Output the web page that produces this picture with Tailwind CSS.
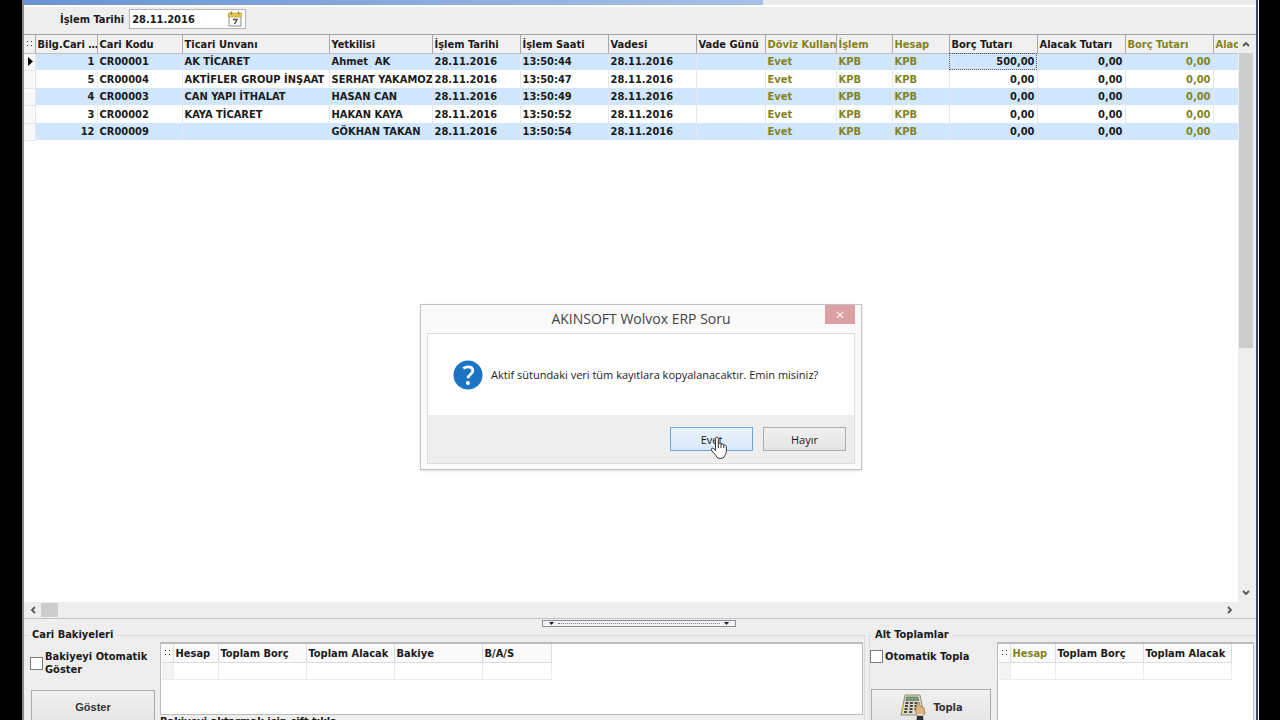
<!DOCTYPE html>
<html lang="tr">
<head>
  <meta charset="UTF-8">
  <meta name="viewport" content="width=device-width, initial-scale=1.0">
  <script src="https://cdn.jsdelivr.net/npm/@tailwindcss/browser@4"></script>
  <title>AKINSOFT Wolvox ERP</title>
</head>
<body class="h-screen overflow-hidden bg-black px-[22px] font-['DejaVu_Sans_Condensed','DejaVu_Sans',sans-serif] text-[11px] font-bold leading-[13px] text-[#1a1a1a]">
  <div class="relative flex h-full flex-col overflow-hidden border-x-2 border-l-[#8a8a8a] border-r-[#3d4670] bg-[#eeeeee] shadow-[1px_0_0_#ffffff]">

    <!-- Title strip -->
    <div class="flex h-[7px] shrink-0 border-b-2 border-white">
      <div class="w-3/5 bg-linear-to-r from-[#6893d2] to-[#a8c1e8]"></div>
      <div class="flex-1 bg-[#ececec]"></div>
    </div>

    <!-- Date filter -->
    <div class="flex h-[27px] shrink-0 items-start gap-[5px] pl-[36px] pt-[2px]">
      <label for="date" class="pt-1">İşlem Tarihi</label>
      <div class="flex h-5 w-[117px] items-center border border-[#b4b4b4] bg-white pl-[2px] pr-[3px]">
        <input id="date" type="text" value="28.11.2016" class="w-0 flex-1 font-bold outline-none">
        <button type="button" aria-label="Takvim">
          <svg class="block h-4 w-[14px]" viewBox="0 0 14 16">
            <rect x="1" y="3" width="12" height="12" fill="#fbfbfb" stroke="#8f8f8f"/>
            <rect x="0.5" y="2" width="13" height="4" fill="#e8c64a" stroke="#b89a3a" stroke-width=".6"/>
            <path d="M3.5 0.5v3M10.5 0.5v3" stroke="#8a7a4a" stroke-width="1.4"/>
            <path d="M5 8.5h4L6.6 13" fill="none" stroke="#4a4a4a" stroke-width="1.4"/>
          </svg>
        </button>
      </div>
    </div>

    <!-- Records grid -->
    <div class="flex min-h-0 flex-1 flex-col border-y border-t-[#a0a0a0] border-b-[#c4c4c4] pr-[2px]">
      <div class="flex min-h-0 flex-1">
        <div class="min-w-0 flex-1 overflow-hidden bg-white">
          <table class="w-[1276px] table-fixed border-collapse whitespace-nowrap">
            <colgroup>
              <col class="w-[11px]"><col class="w-[62px]"><col class="w-[85px]"><col class="w-[147px]">
              <col class="w-[103px]"><col class="w-[88px]"><col class="w-[88px]"><col class="w-[88px]">
              <col class="w-[69px]"><col class="w-[71px]"><col class="w-[56px]"><col class="w-[57px]">
              <col class="w-[88px]"><col class="w-[88px]"><col class="w-[88px]"><col class="w-[88px]">
            </colgroup>
            <thead>
              <tr id="head" class="h-[18px] bg-[#f0f0f0]"></tr>
            </thead>
            <tbody id="rows"></tbody>
          </table>
        </div>
        <div class="flex w-4 flex-col items-center">
          <button type="button" aria-label="Yukarı" class="flex h-[18px] shrink-0 items-center">
            <svg class="h-[6px] w-[8px]" viewBox="0 0 8 6"><path d="M1 5l3-3 3 3" fill="none" stroke="#555" stroke-width="1.8"/></svg>
          </button>
          <div class="h-[295px] w-[14px] bg-[#cdcdcd]"></div>
          <button type="button" aria-label="Aşağı" class="mt-auto flex h-[18px] shrink-0 items-center">
            <svg class="h-[6px] w-[8px]" viewBox="0 0 8 6"><path d="M1 1l3 3 3-3" fill="none" stroke="#555" stroke-width="1.8"/></svg>
          </button>
        </div>
      </div>
      <div class="flex h-4 shrink-0 items-center pr-4">
        <button type="button" aria-label="Sol" class="flex w-[17px] justify-center">
          <svg class="h-[8px] w-[6px]" viewBox="0 0 6 8"><path d="M5 1L2 4l3 3" fill="none" stroke="#555" stroke-width="1.8"/></svg>
        </button>
        <div class="h-[14px] w-[17px] bg-[#cdcdcd]"></div>
        <button type="button" aria-label="Sağ" class="ml-auto flex w-[17px] justify-center">
          <svg class="h-[8px] w-[6px]" viewBox="0 0 6 8"><path d="M1 1l3 3-3 3" fill="none" stroke="#555" stroke-width="1.8"/></svg>
        </button>
      </div>
    </div>

    <!-- Splitter -->
    <div class="flex h-[9px] shrink-0 justify-center pt-px pr-[2px]">
      <div class="flex h-[7px] w-[194px] items-center justify-between border border-[#8d8d98] bg-[#f4f4f4] px-[6px]">
        <svg class="h-[3px] w-[5px]" viewBox="0 0 5 3"><path d="M0 0h5L2.5 3z" fill="#16163c"/></svg>
        <div class="mx-1 flex-1 border-t border-dotted border-[#7a7a90]"></div>
        <svg class="h-[3px] w-[5px]" viewBox="0 0 5 3"><path d="M0 0h5L2.5 3z" fill="#16163c"/></svg>
      </div>
    </div>

    <!-- Totals -->
    <div class="flex h-[92px] shrink-0 gap-1">
      <fieldset class="h-[110px] min-w-0 flex-1 border border-l-0 border-[#dcdcdc] pr-px">
        <legend class="ml-[5px] px-[3px] leading-[14px]">Cari Bakiyeleri</legend>
        <div class="flex">
          <div class="w-[136px] shrink-0 pl-[6px] pt-[8px]">
            <div class="flex items-center gap-[2px]">
              <input id="autoBalance" type="checkbox" class="size-[13px] shrink-0 appearance-none border border-[#7c7c7c] bg-white">
              <label for="autoBalance" class="whitespace-nowrap">Bakiyeyi Otomatik<br>Göster</label>
            </div>
            <button type="button" class="mt-[14px] ml-px h-[35px] w-[124px] border border-[#ababab] bg-linear-to-b from-[#f0f0f0] to-[#e5e5e5] font-['Liberation_Sans',sans-serif] font-bold text-[#333]">Göster</button>
          </div>
          <div class="min-w-0 flex-1">
            <div class="h-[73px] border border-t-2 border-[#bcbcbc] bg-white px-px">
              <table class="w-[389px] table-fixed border-collapse whitespace-nowrap text-left">
                <colgroup><col class="w-[11px]"><col class="w-[45px]"><col class="w-[88px]"><col class="w-[88px]"><col class="w-[88px]"><col class="w-[69px]"></colgroup>
                <tr class="h-[18px] bg-[#fafafa] *:border-r *:border-b *:border-[#dcdcdc] *:p-0 *:pt-px *:pl-[2px]">
                  <th class="leading-none">
                    <svg class="h-[8px] w-[8px]" viewBox="0 0 8 8" fill="#333"><path d="M1 1h1v1H1zM5 1h1v1H5zM1 5h1v1H1zM5 5h1v1H5z"/></svg>
                  </th>
                  <th>Hesap</th><th>Toplam Borç</th><th>Toplam Alacak</th><th>Bakiye</th><th>B/A/S</th>
                </tr>
                <tr class="h-[17px] *:border-r *:border-b *:border-[#ececec]">
                  <td class="bg-[#f4f4f4]"></td><td></td><td></td><td></td><td></td><td></td>
                </tr>
              </table>
            </div>
            <p class="whitespace-nowrap">Bakiyeyi aktarmak için çift tıkla</p>
          </div>
        </div>
      </fieldset>

      <fieldset class="h-[110px] w-[387px] border border-r-0 border-[#dcdcdc] pr-[2px]">
        <legend class="ml-[2px] px-[3px] leading-[14px]">Alt Toplamlar</legend>
        <div class="flex">
          <div class="w-[127px] shrink-0 pt-[8px]">
            <div class="flex items-center gap-[2px]">
              <input id="autoSum" type="checkbox" class="size-[13px] appearance-none border border-[#7c7c7c] bg-white">
              <label for="autoSum">Otomatik Topla</label>
            </div>
            <button type="button" class="mt-[26px] ml-px flex h-[36px] w-[120px] items-center justify-center gap-[6px] border border-[#ababab] bg-linear-to-b from-[#f0f0f0] to-[#e5e5e5] text-[#333]">
              <svg class="h-[27px] w-[28px]" viewBox="0 0 26 27">
                <path d="M5 1h15l4 20H1z" fill="#dcd9c8" stroke="#77766a" stroke-width=".8"/>
                <path d="M6.500 3h11.500l.6 3.500H5.800z" fill="#7d9a7c" stroke="#55644f" stroke-width=".6"/>
                <path d="M5.500 9h3M10 9h3M14.500 9h3M5 12h3M9.800 12h3M14.500 12h3M4.500 15h3M9.500 15h3M14.500 15h3M4 18h3M9.200 18h3" stroke="#4a4a44" stroke-width="1.800"/>
                <path d="M2 18l1-6" stroke="#d5b93c" stroke-width="1.500"/>
                <path d="M17 21l-1.500-5 2-7 1.500-1 1 4 4 2 1 5-2 3z" fill="#dfb582" stroke="#8d6538" stroke-width=".7"/>
                <path d="M17 21l6 .5.5 5.500h-7z" fill="#2e3138"/>
                <path d="M17 21h6.500" stroke="#fff" stroke-width="1.200"/>
              </svg>
              Topla
            </button>
          </div>
          <div class="h-[96px] min-w-0 flex-1 border border-t-2 border-[#bcbcbc] bg-white px-px">
            <table class="w-[232px] table-fixed border-collapse whitespace-nowrap text-left">
              <colgroup><col class="w-[11px]"><col class="w-[45px]"><col class="w-[88px]"><col class="w-[88px]"></colgroup>
              <tr class="h-[18px] bg-[#fafafa] *:border-r *:border-b *:border-[#dcdcdc] *:p-0 *:pt-px *:pl-[2px]">
                <th class="leading-none">
                  <svg class="h-[8px] w-[8px]" viewBox="0 0 8 8" fill="#333"><path d="M1 1h1v1H1zM5 1h1v1H5zM1 5h1v1H1zM5 5h1v1H5z"/></svg>
                </th>
                <th class="text-[#83831c]">Hesap</th><th>Toplam Borç</th><th>Toplam Alacak</th>
              </tr>
              <tr class="h-[17px] *:border-r *:border-b *:border-[#ececec]">
                <td class="bg-[#f4f4f4]"></td><td></td><td></td><td></td>
              </tr>
            </table>
          </div>
        </div>
      </fieldset>
    </div>

    <!-- Confirm dialog -->
    <div role="dialog" aria-labelledby="dialogTitle" class="absolute top-[304px] left-1/2 ml-px flex w-[442px] -translate-x-1/2 flex-col border border-[#c3c3c3] bg-[#fafafa] px-[6px] pb-[5px] font-['Open_Sans',sans-serif] font-normal shadow-sm">
      <div class="relative flex h-[28px] items-center justify-center">
        <h2 id="dialogTitle" class="text-[14px] leading-[20px] text-[#444]">AKINSOFT Wolvox ERP Soru</h2>
        <button type="button" aria-label="Kapat" class="absolute top-0 right-0 flex h-[19px] w-[30px] items-center justify-center bg-[#dc9fa3]">
          <svg class="size-[8px]" viewBox="0 0 8 8"><path d="M1 1l6 6M7 1L1 7" stroke="#f7e6e7" stroke-width="1.500"/></svg>
        </button>
      </div>
      <div class="border border-[#dcdcdc]">
        <div class="flex h-[81px] items-center gap-[8px] bg-white pl-[25px]">
          <svg class="size-[30px]" viewBox="0 0 30 30">
            <circle cx="15" cy="15" r="14.500" fill="#1b74c4"/>
            <path d="M10.300 8.300c1.400-1 3-1.500 4.800-1.500 3 0 4.700 1.500 4.700 3.900 0 3.700-4.900 3.900-4.900 7.600" fill="none" stroke="#fff" stroke-width="2.800"/>
            <circle cx="14.900" cy="23" r="2" fill="#fff"/>
          </svg>
          <p class="leading-4 text-[#222]">Aktif sütundaki veri tüm kayıtlara kopyalanacaktır. Emin misiniz?</p>
        </div>
        <div class="flex h-[48px] justify-end gap-[10px] bg-[#eeeeee] pt-[12px] pr-[8px]">
          <button type="button" class="relative h-[24px] w-[83px] border border-[#6aa5dc] bg-linear-to-b from-[#ebf4fc] to-[#d7e9fb]">
            Evet
            <!-- pointer -->
            <svg class="absolute top-[8px] left-[39px] h-[23px] w-[18px]" viewBox="0 0 18 23">
              <path d="M5.500 13V2.500C5.500 .6 8.300 .6 8.300 2.500V8c.3-1 2.700-.9 2.700.6.400-1 2.700-.8 2.700.8.500-.8 2.600-.5 2.600 1.100v5c0 3-2 3.500-2.200 5.700C12.500 22.800 8 22.800 7 21.300 6 18.800 3 16.800 1.500 14.300.6 12.500 2.600 11.500 3.800 12.600L5.500 14.500z" fill="#fff" stroke="#333" stroke-width="1"/>
              <path d="M8.300 8v4M11 8.600V12M13.700 9.400V12" stroke="#333" stroke-width="1"/>
            </svg>
          </button>
          <button type="button" class="h-[24px] w-[83px] border border-[#adadad] bg-linear-to-b from-[#f0f0f0] to-[#e5e5e5]">Hayır</button>
        </div>
      </div>
    </div>
  </div>

  <script>
    const heads = ['', 'Bilg.Cari …', 'Cari Kodu', 'Ticari Unvanı', 'Yetkilisi', 'İşlem Tarihi', 'İşlem Saati', 'Vadesi',
      'Vade Günü', 'Döviz Kullan', 'İşlem', 'Hesap', 'Borç Tutarı', 'Alacak Tutarı', 'Borç Tutarı', 'Alacak Tutarı'];
    const records = [
      ['1', 'CR00001', 'AK TİCARET', 'Ahmet\u00a0 AK', '13:50:44', '500,00'],
      ['5', 'CR00004', 'AKTİFLER GROUP İNŞAAT', 'SERHAT YAKAMOZ', '13:50:47', '0,00'],
      ['4', 'CR00003', 'CAN YAPI İTHALAT', 'HASAN CAN', '13:50:49', '0,00'],
      ['3', 'CR00002', 'KAYA TİCARET', 'HAKAN KAYA', '13:50:52', '0,00'],
      ['12', 'CR00009', '', 'GÖKHAN TAKAN', '13:50:54', '0,00'],
    ];
    // currency columns are olive, amounts are right aligned
    const olive = [9, 10, 11, 14, 15];
    const right = [1, 12, 13, 14, 15];
    const dots = '<svg class="h-[8px] w-[8px]" viewBox="0 0 8 8" fill="#333"><path d="M1 1h1v1H1zM5 1h1v1H5zM1 5h1v1H1zM5 5h1v1H5z"/></svg>';
    const arrow = '<svg class="h-[9px] w-[5px]" viewBox="0 0 5 9"><path d="M0 0l5 4.500L0 9z" fill="#000"/></svg>';

    document.getElementById('head').innerHTML = heads.map((text, i) =>
      `<th class="overflow-hidden border-r border-b border-r-[#a8a8a8] border-b-[#c0c0c0] p-0 pt-px pl-[2px] text-left ${olive.includes(i) ? 'text-[#83831c]' : ''}">${i ? text : dots}</th>`
    ).join('');

    document.getElementById('rows').innerHTML = records.map(([no, code, title, person, time, debit], r) => {
      const cells = [r ? '' : arrow, no, code, title, person, '28.11.2016', time, '28.11.2016', '', 'Evet', 'KPB', 'KPB', debit, '0,00', '0,00', ''];
      return '<tr class="odd:h-[17px] even:h-[18px] odd:bg-[#d0e6fc]">' + cells.map((text, i) =>
        `<td class="overflow-hidden border-r border-[#e4e8ec] p-0 ${i ? '' : 'border-b bg-[#f8f8f8] pl-[4px]'} ${right.includes(i) ? 'pr-[2px] text-right' : 'pl-[2px]'} ${olive.includes(i) ? 'text-[#83831c]' : ''} ${r === 0 && i === 12 ? 'outline outline-dotted -outline-offset-1 outline-[#555]' : ''}">${text}</td>`
      ).join('') + '</tr>';
    }).join('');
  </script>
</body>
</html>
